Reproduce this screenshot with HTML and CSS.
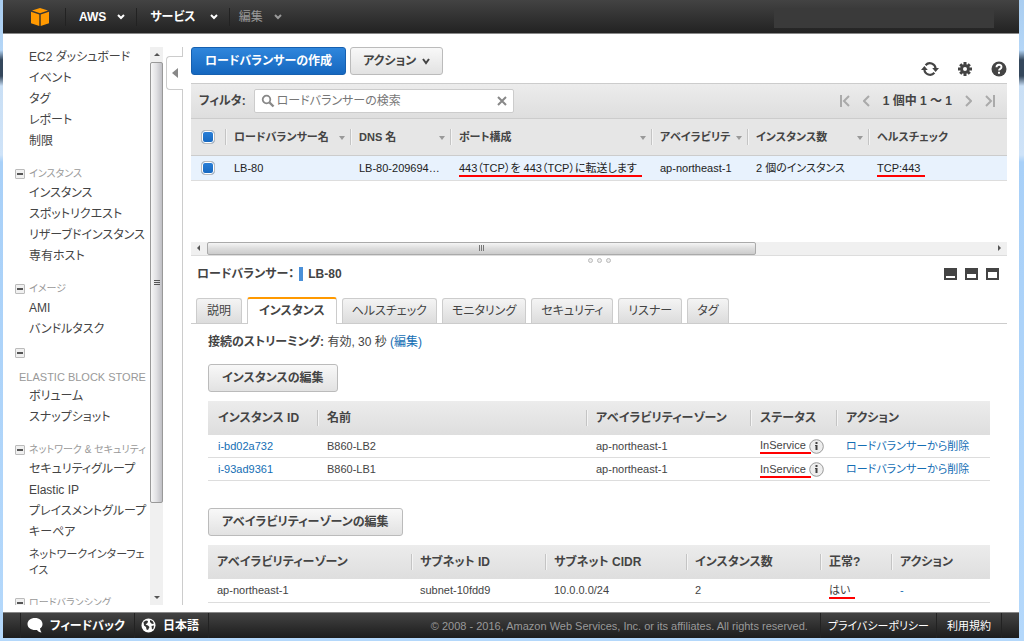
FILE: index.html
```html
<!DOCTYPE html>
<html lang="ja">
<head>
<meta charset="utf-8">
<title>EC2 Management Console</title>
<link rel="stylesheet" href="styles.css">
</head>
<body>
<div class="window">
  <header class="topbar">
    <a class="logo" href="#" aria-label="ホーム">
      <svg width="20" height="20" viewBox="0 0 20 20"><path fill="#f90" d="M10 1l8 2.600-8 2.600-8-2.600zM1 4.800l8.300 2.700V19L1 16.200zM19 4.800l-8.300 2.700V19L19 16.200z"/></svg>
    </a>
    <button class="menu menu-aws" type="button">AWS <svg class="chev" width="8" height="6" viewBox="0 0 8 6"><path d="M1 1l3 3 3-3"/></svg></button>
    <button class="menu menu-services" type="button">サービス <svg class="chev" width="8" height="6" viewBox="0 0 8 6"><path d="M1 1l3 3 3-3"/></svg></button>
    <button class="menu menu-edit" type="button">編集 <svg class="chev" width="8" height="6" viewBox="0 0 8 6"><path d="M1 1l3 3 3-3"/></svg></button>
    <div class="account"></div>
  </header>

  <div class="main">
    <nav class="sidebar">
      <ul>
        <li><a href="#">EC2 ダッシュボード</a></li>
        <li><a href="#">イベント</a></li>
        <li><a href="#">タグ</a></li>
        <li><a href="#">レポート</a></li>
        <li><a href="#">制限</a></li>
      </ul>
      <h2><button class="fold" type="button" aria-label="折りたたむ"></button>インスタンス</h2>
      <ul>
        <li><a href="#">インスタンス</a></li>
        <li><a href="#">スポットリクエスト</a></li>
        <li><a href="#">リザーブドインスタンス</a></li>
        <li><a href="#">専有ホスト</a></li>
      </ul>
      <h2><button class="fold" type="button" aria-label="折りたたむ"></button>イメージ</h2>
      <ul>
        <li><a href="#">AMI</a></li>
        <li><a href="#">バンドルタスク</a></li>
      </ul>
      <h2 class="stacked"><button class="fold" type="button" aria-label="折りたたむ"></button><span>ELASTIC BLOCK STORE</span></h2>
      <ul>
        <li><a href="#">ボリューム</a></li>
        <li><a href="#">スナップショット</a></li>
      </ul>
      <h2><button class="fold" type="button" aria-label="折りたたむ"></button>ネットワーク &amp; セキュリティ</h2>
      <ul>
        <li><a href="#">セキュリティグループ</a></li>
        <li><a href="#">Elastic IP</a></li>
        <li><a href="#">プレイスメントグループ</a></li>
        <li><a href="#">キーペア</a></li>
        <li class="wrap"><a href="#">ネットワークインターフェイス</a></li>
      </ul>
      <h2><button class="fold" type="button" aria-label="折りたたむ"></button>ロードバランシング</h2>
    </nav>
    <div class="vscroll">
      <svg width="13" height="15" viewBox="0 0 13 15"><path fill="#555" d="M4 9h6L7 6z"/></svg>
      <div class="vthumb"><i></i><i></i><i></i></div>
      <svg width="13" height="15" viewBox="0 0 13 15"><path fill="#555" d="M4 6h6L7 9z"/></svg>
    </div>
    <div class="gutter">
      <button class="collapse" type="button" aria-label="サイドバーを閉じる"><svg width="6" height="10" viewBox="0 0 6 10"><path fill="#888" d="M6 0v10L0 5z"/></svg></button>
    </div>

    <main class="content">
      <div class="toolbar">
        <button class="btn primary" type="button">ロードバランサーの作成</button>
        <button class="btn" type="button">アクション <svg class="chev" width="8" height="7" viewBox="0 0 8 7"><path d="M1 1l3 4 3-4"/></svg></button>
        <div class="tools">
          <button type="button" aria-label="更新"><svg width="18" height="16" viewBox="0 0 18 16"><g fill="none" stroke="#444" stroke-width="2.200"><path d="M4.600 4.200A5.700 5.700 0 0 1 14.600 7.500"/><path d="M13.400 11.800A5.700 5.700 0 0 1 3.400 8.500"/></g><path fill="#444" d="M11.200 7H18l-3.400 4zM6.800 9H0l3.400-4z"/></svg></button>
          <button type="button" aria-label="設定"><svg width="14" height="14" viewBox="0 0 14 14"><g stroke="#444" stroke-width="3"><path d="M7 0v14M0 7h14M2.200 2.200l9.600 9.600M11.800 2.200l-9.600 9.600"/></g><circle cx="7" cy="7" r="4.800" fill="#444"/><circle cx="7" cy="7" r="2" fill="#fff"/></svg></button>
          <button type="button" aria-label="ヘルプ"><svg width="16" height="16" viewBox="0 0 16 16"><circle cx="8" cy="8" r="7.500" fill="#444"/><path d="M5.500 6.300C5.500 3 10.500 3 10.500 6.100 10.500 8 8 7.800 8 9.600" fill="none" stroke="#fff" stroke-width="1.900"/><path fill="#fff" d="M7 10.800h2v2H7z"/></svg></button>
        </div>
      </div>

      <div class="filterbar">
        <label for="search">フィルタ:</label>
        <div class="search">
          <svg width="14" height="14" viewBox="0 0 14 14"><circle cx="5.500" cy="5.500" r="3.800" fill="none" stroke="#888" stroke-width="1.800"/><path d="M8.500 8.500L12.500 12.500" stroke="#888" stroke-width="2.400"/></svg>
          <input id="search" type="text" placeholder="ロードバランサーの検索">
          <button type="button" aria-label="クリア"><svg width="10" height="10" viewBox="0 0 10 10"><path d="M1 1l8 8M9 1L1 9" stroke="#888" stroke-width="2"/></svg></button>
        </div>
        <div class="pager">
          <button type="button" aria-label="最初"><svg width="10" height="12" viewBox="0 0 10 12"><path d="M1 0v12M9 1L4 6l5 5"/></svg></button>
          <button type="button" aria-label="前"><svg width="7" height="12" viewBox="0 0 7 12"><path d="M6 1L1 6l5 5"/></svg></button>
          <span>1 個中 1 ～ 1</span>
          <button type="button" aria-label="次"><svg width="7" height="12" viewBox="0 0 7 12"><path d="M1 1l5 5-5 5"/></svg></button>
          <button type="button" aria-label="最後"><svg width="10" height="12" viewBox="0 0 10 12"><path d="M9 0v12M1 1l5 5-5 5"/></svg></button>
        </div>
      </div>

      <div class="listpane">
        <table class="list">
          <colgroup><col class="l0"><col class="l1"><col class="l2"><col class="l3"><col class="l4"><col class="l5"><col></colgroup>
          <thead><tr>
            <th><input type="checkbox" checked aria-label="すべて選択"></th>
            <th class="sort">ロードバランサー名</th>
            <th class="sort">DNS 名</th>
            <th class="sort">ポート構成</th>
            <th class="sort">アベイラビリテ</th>
            <th class="sort">インスタンス数</th>
            <th>ヘルスチェック</th>
          </tr></thead>
          <tbody><tr>
            <td><input type="checkbox" checked aria-label="LB-80 を選択"></td>
            <td>LB-80</td>
            <td>LB-80-209694…</td>
            <td><span class="mark">443（TCP）を 443（TCP）に転送します</span></td>
            <td>ap-northeast-1</td>
            <td>2 個のインスタンス</td>
            <td><span class="mark">TCP:443</span></td>
          </tr></tbody>
        </table>
      </div>
      <div class="hscroll">
        <svg width="16" height="13" viewBox="0 0 16 13"><path fill="#555" d="M9 3v6L6 6z"/></svg>
        <div class="htrack"><div class="hthumb"><i></i><i></i><i></i></div></div>
        <svg width="16" height="13" viewBox="0 0 16 13"><path fill="#555" d="M7 3v6l3-3z"/></svg>
      </div>
      <div class="splitter"><i></i><i></i><i></i></div>

      <section class="details">
        <div class="title">
          <h1>ロードバランサー： <i class="bar"></i> LB-80</h1>
          <div class="sizes">
            <button class="s1" type="button" aria-label="小"></button>
            <button class="s2" type="button" aria-label="中"></button>
            <button class="s3" type="button" aria-label="大"></button>
          </div>
        </div>
        <div class="tabs" role="tablist">
          <button type="button" role="tab">説明</button>
          <button type="button" role="tab" class="active" aria-selected="true">インスタンス</button>
          <button type="button" role="tab">ヘルスチェック</button>
          <button type="button" role="tab">モニタリング</button>
          <button type="button" role="tab">セキュリティ</button>
          <button type="button" role="tab">リスナー</button>
          <button type="button" role="tab">タグ</button>
        </div>
        <div class="panel">
          <p class="drain"><b>接続のストリーミング:</b> 有効, 30 秒 <a href="#">(編集)</a></p>
          <button class="btn" type="button">インスタンスの編集</button>
          <table class="grid instances">
            <colgroup><col class="a1"><col><col class="a3"><col class="a4"><col class="a5"></colgroup>
            <thead><tr><th>インスタンス ID</th><th>名前</th><th>アベイラビリティーゾーン</th><th>ステータス</th><th>アクション</th></tr></thead>
            <tbody>
              <tr><td><a href="#">i-bd02a732</a></td><td>B860-LB2</td><td>ap-northeast-1</td><td><span class="mark">InService</span> <svg class="info" width="15" height="15" viewBox="0 0 15 15"><circle cx="7.500" cy="7.500" r="6.800" fill="#eee" stroke="#999"/><path fill="#444" d="M6.500 3h2v2h-2zM6 6h2.500v5H6.500V7H6z"/></svg></td><td><a href="#">ロードバランサーから削除</a></td></tr>
              <tr><td><a href="#">i-93ad9361</a></td><td>B860-LB1</td><td>ap-northeast-1</td><td><span class="mark">InService</span> <svg class="info" width="15" height="15" viewBox="0 0 15 15"><circle cx="7.500" cy="7.500" r="6.800" fill="#eee" stroke="#999"/><path fill="#444" d="M6.500 3h2v2h-2zM6 6h2.500v5H6.500V7H6z"/></svg></td><td><a href="#">ロードバランサーから削除</a></td></tr>
            </tbody>
          </table>
          <button class="btn" type="button">アベイラビリティーゾーンの編集</button>
          <table class="grid zones">
            <colgroup><col><col class="z2"><col class="z3"><col class="z4"><col class="z5"><col class="z6"></colgroup>
            <thead><tr><th>アベイラビリティーゾーン</th><th>サブネット ID</th><th>サブネット CIDR</th><th>インスタンス数</th><th>正常?</th><th>アクション</th></tr></thead>
            <tbody><tr><td>ap-northeast-1</td><td>subnet-10fdd9</td><td>10.0.0.0/24</td><td>2</td><td><span class="mark">はい</span></td><td><a href="#">-</a></td></tr></tbody>
          </table>
        </div>
      </section>
    </main>
  </div>

  <footer class="footer">
    <button type="button" class="feedback"><svg width="16" height="15" viewBox="0 0 16 15"><path fill="#fff" d="M8 0c4.400 0 7.500 2.600 7.500 6 0 2-1 3.500-2.500 4.600.1 1.500.6 2.700 1.500 3.900-2-.3-3.500-1.200-4.500-2.600C4.500 12.600.5 10 .5 6 .5 2.600 3.600 0 8 0z"/></svg>フィードバック</button>
    <button type="button" class="lang"><svg width="15" height="15" viewBox="0 0 15 15"><circle cx="7.500" cy="7.500" r="7" fill="#fff"/><path fill="#333" d="M2.500 4l2.500-1.500 2 .5-.5 2-2 1.500 2.500 1 1.500 1.500-1.500 3-1.500-.5-.5-2.500-2-1.500zM9 2l2.500 1 1.500 2.500-2 .5-2-2zM10.500 8l2.500-.5-.5 3-1.500 1z"/></svg>日本語</button>
    <span class="copy">© 2008 - 2016, Amazon Web Services, Inc. or its affiliates. All rights reserved.</span>
    <a class="privacy" href="#">プライバシーポリシー</a>
    <a class="terms" href="#">利用規約</a>
  </footer>
</div>
</body>
</html>
```
FILE: styles.css
```css
* { box-sizing: border-box; }
body {
  margin: 0;
  font: 11px/16px "Liberation Sans", "Noto Sans CJK JP", sans-serif;
  font-feature-settings: "palt";
  color: #444;
}
button, input {
  font: inherit;
  font-feature-settings: inherit;
  color: inherit;
  margin: 0;
  padding: 0;
  border: 0;
  background: none;
}
a { color: #146eb4; text-decoration: none; }
svg { display: block; flex: none; }
ul { list-style: none; margin: 0; padding: 0; }

.window {
  height: 100vh;
  display: flex;
  flex-direction: column;
  padding: 0 5px 3px 3px;
  background: linear-gradient(#a9cdf0 0, #b4d6f7 50px, #34475c 60px, #34475c 76px, #c9dff5 86px, #cfe3f8 155px, #a8d0f8 162px, #b4d8fb);
}

/* Top bar */
.topbar {
  flex: none;
  height: 34px;
  display: flex;
  align-items: center;
  background: linear-gradient(#434343, #222);
  border-bottom: 1px solid #888;
}
.logo { padding: 0 15px 0 27px; }
.menu {
  height: 18px;
  display: flex;
  align-items: center;
  border-left: 1px solid #222;
  padding: 0 11px 0 13px;
  font-size: 12px;
  font-weight: bold;
  color: #fff;
}
.menu .chev { margin-left: 11px; }
.menu-services .chev { margin-left: 14px; }
.menu-edit { padding-left: 9px; font-weight: normal; color: #999; }
.chev path { fill: none; stroke: currentColor; stroke-width: 2; }
.account { margin: 3px 25px 0 auto; width: 220px; height: 20px; background: #3a3a3a; }

.main { flex: 1; min-height: 0; display: flex; background: #fff; padding: 13px 0 7px; }

/* Navigation */
.sidebar { flex: none; width: 147px; overflow: hidden; font-size: 12px; }
.sidebar ul a { color: #444; }
.sidebar li { line-height: 21px; padding-left: 26px; white-space: nowrap; }
.sidebar li.wrap { font-size: 11px; line-height: 16px; padding-top: 3px; padding-bottom: 3px; white-space: normal; }
.sidebar h2 {
  display: flex;
  align-items: center;
  gap: 4px;
  margin: 13px 0 0;
  padding-left: 12px;
  font-size: 10px;
  font-weight: normal;
  line-height: 18px;
  white-space: nowrap;
  color: #999;
}
.sidebar h2.stacked { flex-direction: column; align-items: flex-start; gap: 10px; margin-top: 8px; font-size: 11px; }
.stacked span { padding-left: 4px; }
.fold { flex: none; width: 10px; height: 10px; border: 1px solid #bbb; border-radius: 1px; background: linear-gradient(#555, #555) center / 6px 2px no-repeat #f0f0f0; }

.vscroll { flex: none; width: 13px; display: flex; flex-direction: column; background: #f0f0f0; }
.vthumb {
  flex: 1;
  margin-bottom: 87px;
  display: flex;
  flex-direction: column;
  align-items: center;
  justify-content: center;
  gap: 1px;
  border: 1px solid #999;
  border-radius: 2px;
  background: linear-gradient(90deg, #f7f7f7, #e0e0e3 50%, #bfbfc4);
}
.vthumb i { width: 6px; height: 1px; background: #555; }
.gutter { flex: none; width: 20px; display: flex; flex-direction: column; align-items: flex-end; }
.gutter::before, .gutter::after { content: ""; border-right: 1px solid #ccc; }
.gutter::before { height: 9px; }
.gutter::after { flex: 1; }
.collapse { width: 17px; height: 34px; padding-left: 5px; border: 1px solid #ccc; border-right: 0; border-radius: 4px 0 0 4px; }

/* Toolbar */
.content { flex: 1; min-width: 0; display: flex; flex-direction: column; padding: 0 12px 0 8px; }
.btn {
  display: inline-flex;
  align-items: center;
  height: 28px;
  padding: 0 12px;
  border: 1px solid #bbb;
  border-radius: 3px;
  background: linear-gradient(#f8f8f8, #e2e2e2);
  font-size: 12px;
  font-weight: bold;
  white-space: nowrap;
}
.btn .chev { margin-left: 6px; }
.primary { padding: 0 13px; border-color: #1660b0; background: linear-gradient(#2f86dc, #1567bf); color: #fff; }
.toolbar { display: flex; gap: 4px; height: 36px; align-items: flex-start; }
.tools { margin: 14px 0 0 auto; display: flex; align-items: center; gap: 19px; }

.filterbar {
  display: flex;
  align-items: center;
  height: 36px;
  padding: 0 12px 0 8px;
  border-top: 1px solid #ccc;
  border-bottom: 1px solid #ccc;
  background: linear-gradient(#ececec, #dedede);
}
.filterbar label { font-size: 12px; font-weight: bold; }
.search { margin-left: 8px; width: 260px; height: 24px; display: flex; align-items: center; gap: 2px; padding: 0 6px; border: 1px solid #ccc; border-radius: 2px; background: #fff; }
.search input { flex: 1; min-width: 0; font-size: 12px; outline: 0; }
.search input::placeholder { color: #777; opacity: 1; }
.pager { margin-left: auto; display: flex; align-items: center; gap: 13px; font-size: 12px; font-weight: bold; white-space: nowrap; }
.pager path { fill: none; stroke: #aaa; stroke-width: 2; }

/* Tables */
table { width: 100%; table-layout: fixed; border-collapse: collapse; }
th, td { text-align: left; white-space: nowrap; padding: 0 0 0 9px; }
th { position: relative; font-size: 12px; color: #444; }
th + th::before { content: ""; position: absolute; left: 0; top: 50%; height: 16px; margin-top: -8px; border-left: 1px solid #c4c4c4; border-right: 1px solid #f4f4f4; }
input[type="checkbox"] { appearance: none; display: block; width: 14px; height: 14px; border: 1px solid #bbb; border-radius: 4px; background: #fff; }
input[type="checkbox"]:checked { background: linear-gradient(#2b80d8, #1567bf); box-shadow: inset 0 0 0 1px #fff; }
.listpane { padding-bottom: 61px; }
.list th { height: 36px; font-size: 11px; background: #e6e6e6; border-bottom: 1px solid #ccc; }
.list td { height: 25px; background: #e8f2fd; color: #222; border-bottom: 1px solid #ddd; }
.list th:first-child, .list td:first-child { padding-left: 10px; }
.sort::after { content: ""; position: absolute; right: 5px; top: 50%; margin-top: -1px; border: 3px solid transparent; border-top: 4px solid #999; border-bottom: 0; }
.l0 { width: 34px; } .l1 { width: 125px; } .l2 { width: 100px; } .l3 { width: 201px; } .l4 { width: 96px; } .l5 { width: 121px; }
.mark { position: relative; display: inline-block; }
.mark::after { content: ""; position: absolute; left: 0; right: -5px; bottom: -1px; height: 2px; background: #f00; }

.hscroll { display: flex; height: 14px; background: #f0f0f0; border-bottom: 1px solid #ddd; }
.htrack { flex: 1; display: flex; }
.hthumb { width: 70%; display: flex; align-items: center; justify-content: center; gap: 1px; border: 1px solid #aaa; border-radius: 2px; background: linear-gradient(#f5f5f5, #ddd 50%, #ccc); }
.hthumb i { width: 1px; height: 6px; background: #777; }
.splitter { display: flex; justify-content: center; gap: 4px; height: 10px; padding-top: 2px; }
.splitter i { width: 5px; height: 5px; border: 1px solid #bbb; border-radius: 50%; background: #eee; }

/* Details */
.title { display: flex; justify-content: space-between; align-items: center; padding: 0 8px 0 6px; }
.title h1 { display: flex; align-items: center; gap: 5px; margin: 0; font-size: 12px; line-height: 16px; }
.bar { width: 4px; height: 14px; background: #4a90d9; }
.sizes { display: flex; gap: 8px; }
.sizes button { width: 13px; height: 12px; border: 2px solid #444; background: #fff; }
.sizes .s1 { border-top-width: 8px; }
.sizes .s2 { border-top-width: 6px; }
.sizes .s3 { border-top-width: 4px; }
.tabs { display: flex; align-items: flex-end; gap: 5px; padding: 15px 5px 0; border-bottom: 1px solid #ccc; }
.tabs button { height: 25px; padding: 0 9px; border: 1px solid #ccc; border-bottom: 0; border-radius: 3px 3px 0 0; background: linear-gradient(#f4f4f4, #dcdcdc); font-size: 12px; white-space: nowrap; }
.tabs button:first-child { padding: 0 10px; }
.tabs .active { height: 27px; margin-bottom: -1px; padding: 0 11px; border-top: 2px solid #f90; background: #fff; font-weight: bold; }
.panel { padding: 10px 17px 0; }
.drain { margin: 0 0 14px; font-size: 12px; }
.panel .btn { display: flex; padding: 0 13px; }
.grid { margin-top: 9px; }
.grid + .btn { margin-top: 27px; }
.instances th, .instances td { padding-left: 10px; }
.grid thead { background: linear-gradient(#ececec, #dedede); }
.grid th { height: 34px; }
.grid td { height: 23px; border-bottom: 1px solid #ddd; }
.info { display: inline-block; vertical-align: middle; }
.a1 { width: 109px; } .a3 { width: 164px; } .a4 { width: 86px; } .a5 { width: 154px; }
.z2 { width: 134px; } .z3 { width: 141px; } .z4 { width: 134px; } .z5 { width: 71px; } .z6 { width: 99px; }

/* Footer */
.footer {
  flex: none;
  height: 26px;
  display: flex;
  align-items: stretch;
  padding: 0 17px 0 17px;
  background: linear-gradient(#434343, #1c1c1c);
  border-top: 1px solid #888;
  white-space: nowrap;
  color: #fff;
}
.footer > * { display: flex; align-items: center; }
.footer button { gap: 7px; padding: 0 9px 0 6px; border-left: 1px solid #222; font-size: 12px; font-weight: bold; }
.footer .lang { border-right: 1px solid #222; }
.footer .copy { margin-left: auto; padding-right: 12px; color: #999; }
.footer a { color: #fff; padding: 0 10px; border-left: 1px solid #222; }
.footer .privacy { padding: 0 7px; }
.footer .terms { border-right: 1px solid #222; }
```
